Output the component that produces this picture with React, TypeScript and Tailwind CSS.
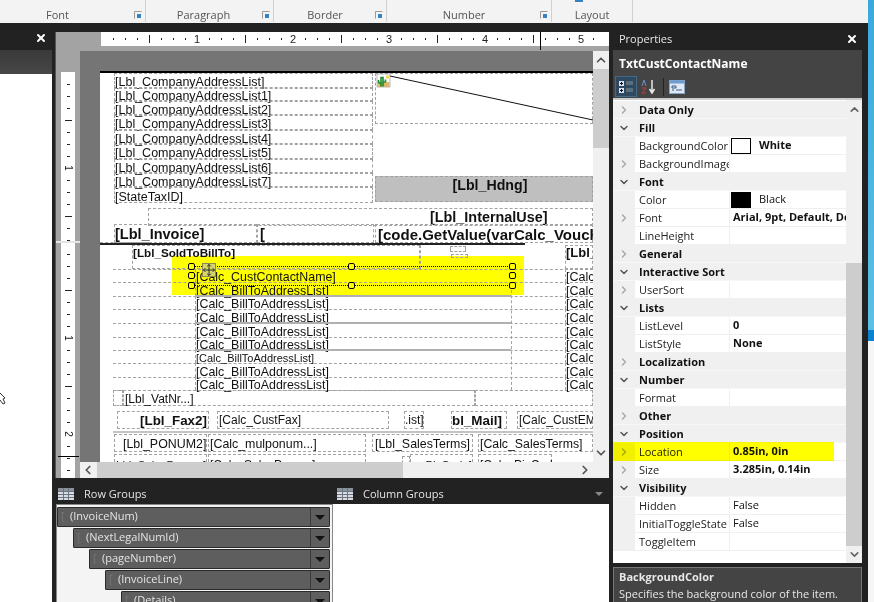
import { ChevronDown, ChevronRight, ChevronUp, ChevronLeft, X } from "lucide-react";

const uiFont = "font-['Open_Sans','Noto_Sans',sans-serif]";

const ribbonGroups = [
  { label: "Font", w: "w-[146px]", pr: "pr-[30px]", launcher: true },
  { label: "Paragraph", w: "w-[128px]", pr: "pr-[12px]", launcher: true },
  { label: "Border", w: "w-[113px]", pr: "pr-[10px]", launcher: true },
  { label: "Number", w: "w-[165px]", pr: "pr-[10px]", launcher: true },
  { label: "Layout", w: "w-[81px]", pr: "pr-0", launcher: false },
];

type Field = {
  text?: string;
  x: number;
  y: number;
  w: number;
  h: number;
  bold?: boolean;
  size?: number;
  pad?: number;
  top?: number;
  shift?: number;
  plain?: boolean;
};

const addressTops = [0, 15, 28, 42, 57, 71, 86, 100];
const addressHeights = [15, 13, 14, 15, 14, 15, 14, 14];

// report items sit at free positions on the design surface, relative to the page
const fields: Field[] = [
  ...["[Lbl_CompanyAddressList]", "[Lbl_CompanyAddressList1]", "[Lbl_CompanyAddressList2]", "[Lbl_CompanyAddressList3]", "[Lbl_CompanyAddressList4]", "[Lbl_CompanyAddressList5]", "[Lbl_CompanyAddressList6]", "[Lbl_CompanyAddressList7]"].map(
    (text, i) => ({ text, x: 14, y: addressTops[i], w: 259, h: addressHeights[i], shift: 4 }),
  ),
  { text: "[StateTaxID]", x: 14, y: 114, w: 259, h: 16, shift: 4 },
  { x: 275, y: 0, w: 218, h: 51 },
  { x: 48, y: 135, w: 445, h: 18 },
  { text: "[Lbl_InternalUse]", x: 330, y: 135, w: 120, h: 18, bold: true, size: 14.4, plain: true },
  { text: "[Lbl_Invoice]", x: 14, y: 151, w: 143, h: 19, bold: true, size: 14.5, shift: 2 },
  { text: "[", x: 157, y: 151, w: 117, h: 19, bold: true, size: 14.5, pad: 2, shift: 2 },
  { text: "[code.GetValue(varCalc_Vouch", x: 275, y: 151, w: 218, h: 19, bold: true, size: 15, pad: 2, shift: 2 },
  { text: "[Lbl_SoldToBillTo]", x: 32, y: 172, w: 288, h: 24, bold: true, size: 11.7, top: 0 },
  { x: 350, y: 173, w: 16, h: 6 },
  { x: 351, y: 181, w: 17, h: 4 },
  { text: "[Lbl_", x: 465, y: 172, w: 28, h: 24, bold: true, size: 13, top: 0 },
  { x: 13, y: 317, w: 10, h: 16 },
  { text: "[Lbl_VatNr...]", x: 23, y: 317, w: 352, h: 16, size: 12, pad: 1, shift: 2 },
  { x: 375, y: 317, w: 118, h: 16 },
  { text: "[Lbl_Fax2]", x: 17, y: 338, w: 92, h: 18, bold: true, size: 13.4, pad: 22 },
  { text: "[Calc_CustFax]", x: 117, y: 338, w: 172, h: 18, size: 12, pad: 1 },
  { text: ".ist]", x: 304, y: 338, w: 20, h: 18, size: 12 },
  { text: "bl_Mail]", x: 351, y: 338, w: 56, h: 18, bold: true, size: 13.4 },
  { text: "[Calc_CustEM", x: 417, y: 338, w: 76, h: 18, size: 12, pad: 1 },
  { text: "[Lbl_PONUM2]", x: 14, y: 361, w: 93, h: 18, size: 12.4, pad: 8, shift: 2 },
  { text: "[Calc_mulponum...]", x: 108, y: 361, w: 158, h: 18, size: 12.4, pad: 1, shift: 2 },
  { text: "[Lbl_SalesTerms]", x: 272, y: 361, w: 101, h: 18, size: 12.4, pad: 2, shift: 2 },
  { text: "[Calc_SalesTerms]", x: 378, y: 361, w: 115, h: 18, size: 12.3, pad: 1, shift: 2 },
  { text: "Lbl_SalesPerson]", x: 14, y: 381, w: 93, h: 18, size: 11.5, pad: 1, shift: 4 },
  { text: "[Calc_SalesPerson]", x: 108, y: 381, w: 158, h: 18, size: 12, pad: 1, shift: 4 },
  { x: 302, y: 383, w: 8, h: 16 },
  { text: "_PicCode]", x: 310, y: 381, w: 63, h: 18, size: 11.5, pad: 8, shift: 4 },
  { text: "[Calc_PicCod", x: 378, y: 381, w: 74, h: 18, size: 12, pad: 1, shift: 4 },
];

const billRows = [
  { y: 196, h: 13, text: "[Calc_CustContactName]" },
  { y: 209, h: 14, text: "[Calc_BillToAddressList]" },
  { y: 223, h: 13, text: "[Calc_BillToAddressList]", solid: true },
  { y: 236, h: 14, text: "[Calc_BillToAddressList]" },
  { y: 250, h: 14, text: "[Calc_BillToAddressList]", solid: true },
  { y: 264, h: 13, text: "[Calc_BillToAddressList]" },
  { y: 277, h: 13, text: "[Calc_BillToAddressList]", small: true, solid: true },
  { y: 290, h: 14, text: "[Calc_BillToAddressList]" },
  { y: 304, h: 13, text: "[Calc_BillToAddressList]" },
];

const sideTicks = [
  ...Array.from({ length: 14 }, (_, i) => ({ y: 12 * (i + 1), n: i + 1 })),
  ...Array.from({ length: 19 }, (_, i) => ({ y: 170 + 12 * (i + 1), n: i + 1 })),
];

function ReportField({ f }: { f: Field }) {
  return (
    <div
      className={`absolute flex whitespace-nowrap text-[#111] font-['Liberation_Sans',Arial,sans-serif] ${f.top !== undefined ? "items-start" : "items-center"} ${f.plain ? "" : "border border-dashed border-[#a3a3a3]"} ${f.bold ? "font-bold" : ""}`}
      style={{ left: f.x, top: f.y, width: f.w, height: f.h, fontSize: f.size ?? 12.5, lineHeight: "13px", paddingLeft: f.pad ?? 0, paddingTop: f.top ?? f.shift ?? 0 }}
    >
      {f.text}
    </div>
  );
}

function Handle({ x, y }: { x: number; y: number }) {
  return <div className="absolute z-10 w-[7px] h-[7px] rounded-[2px] border border-black bg-[#ffff00]" style={{ left: x, top: y }} />;
}

function DesignPage() {
  return (
    <div className="relative h-full overflow-hidden bg-white border-t-2 border-black">
      {/* yellow highlight of the selected row */}
      <div className="absolute left-[72px] top-[183px] w-[352px] h-[39px] bg-[#ffff00]" />

      {fields.map((f, i) => (
        <ReportField key={i} f={f} />
      ))}

      {/* image placeholder and diagonal line */}
      <svg className="absolute left-[275px] top-0 w-[218px] h-[51px]" viewBox="0 0 218 51">
        <line x1="15" y1="3" x2="218" y2="47" stroke="#111" strokeWidth="1" />
        <rect x="2" y="1" width="13" height="13" fill="#fff" stroke="#777" strokeWidth="0.5" />
        <rect x="2.5" y="9" width="12" height="5" fill="#d9b76c" />
        <path d="M6 13.5V4.5h2v9M3.5 10V7M3.5 10H6M10.5 9V6.5M8 9h2.5" fill="none" stroke="#1c8c2e" strokeWidth="1.6" />
        <rect x="11" y="2.5" width="3" height="3" fill="#f0d860" />
      </svg>

      {/* header band */}
      <div className="absolute left-[275px] top-[103px] w-[218px] h-[26px] pl-[12px] bg-[#bfbfbf] border border-dashed border-[#a0a0a0] text-center text-[14.2px] font-bold leading-[17px] text-[#111] font-['Liberation_Sans',Arial,sans-serif]">
        [Lbl_Hdng]
      </div>

      {/* invoice rule */}
      <div className="absolute left-0 top-[170px] w-[425px] h-[2px] bg-[#222]" />
      <div className="absolute left-0 top-[169px] w-[50px] border-t border-dashed border-[#a3a3a3]" />
      <div className="absolute left-[320px] top-[172px] h-[24px] border-l border-dashed border-[#a3a3a3]" />

      {/* bill-to rows */}
      {billRows.map((r) => (
        <div key={r.y} className="absolute left-[13px] w-[480px] border-t border-dashed border-[#a3a3a3]" style={{ top: r.y }} />
      ))}
      <div className="absolute left-[13px] top-[317px] w-[480px] border-t border-dashed border-[#a3a3a3]" />
      {billRows.map((r) => (
        <div
          key={`t${r.y}`}
          className={`absolute left-[95px] w-[316px] flex items-center whitespace-nowrap pt-[4px] text-[#111] font-['Liberation_Sans',Arial,sans-serif] border-l border-dashed border-[#a3a3a3] ${r.small ? "text-[11px]" : "text-[12.4px]"}`}
          style={{ top: r.y, height: r.h, lineHeight: "13px" }}
        >
          {r.text}
        </div>
      ))}
      {billRows.map((r) => (
        <div
          key={`c${r.y}`}
          className="absolute left-[465px] w-[28px] flex items-center whitespace-nowrap pt-[4px] border-l border-dashed border-[#a3a3a3] text-[12.5px] text-[#111] font-['Liberation_Sans',Arial,sans-serif]"
          style={{ top: r.y, height: r.h, lineHeight: "13px" }}
        >
          [Calc
        </div>
      ))}
      {billRows.filter((r) => r.solid).map((r) => (
        <div key={`s${r.y}`} className="absolute left-[95px] w-[316px] border-t-2 border-[#b0b0b0]" style={{ top: r.y - 1 }} />
      ))}
      <div className="absolute left-[411px] top-[212px] h-[105px] border-l border-dashed border-[#a3a3a3]" />
      <div className="absolute left-[13px] top-[358px] w-[480px] h-[2px] bg-[#c4c4c4]" />

      {/* selected textbox */}
      <div className="absolute left-[91px] top-[193px] w-[321px] h-[20px] border-y border-dotted border-black" />
      <Handle x={88} y={190} />
      <Handle x={248} y={190} />
      <Handle x={409} y={190} />
      <Handle x={88} y={199} />
      <Handle x={409} y={199} />
      <Handle x={88} y={209} />
      <Handle x={248} y={209} />
      <Handle x={409} y={209} />
      <div className="absolute z-10 left-[102px] top-[190px] w-[14px] h-[14px] flex items-center justify-center bg-[#d4d46a] border border-[#8a8a50]">
        <svg width="12" height="12" viewBox="0 0 13 13" fill="none" stroke="#222" strokeWidth="1">
          <path d="M6.5 0.5v12M0.5 6.5h12M4.5 2.5l2-2 2 2M4.5 10.5l2 2 2-2M2.5 4.5l-2 2 2 2M10.5 4.5l2 2-2 2" />
        </svg>
      </div>
    </div>
  );
}

function TopRuler() {
  const ticks = Array.from({ length: 41 });
  return (
    <div className="relative h-[14px] bg-white ml-[45px] mb-[5px] shrink-0 text-[11px] leading-[14px] text-[#222] font-['Liberation_Sans',Arial,sans-serif]">
      {ticks.map((_, i) => {
        const x = 12 * (i + 1);
        if ((i + 1) % 8 === 0) return <span key={i} className="absolute top-0" style={{ left: x - 3 }}>{(i + 1) / 8}</span>;
        if ((i + 1) % 4 === 0) return <span key={i} className="absolute top-[3px] h-[8px] w-px bg-[#222]" style={{ left: x }} />;
        return <span key={i} className="absolute top-[6px] h-[2px] w-px bg-[#222]" style={{ left: x }} />;
      })}
      <span className="absolute left-[439px] top-0 h-[18px] w-px bg-black" />
    </div>
  );
}

function SideRuler() {
  return (
    <div className="relative w-[24px] shrink-0">
      <div className="absolute left-[5px] top-[21px] bottom-0 w-[14px] bg-white">
        {sideTicks.map((t) => {
          if (t.n === 8 || t.n === 16) {
            return (
              <span key={t.y} className="absolute left-0 w-full text-center text-[10px] leading-[10px] rotate-90 text-[#222] font-['Liberation_Sans',Arial,sans-serif]" style={{ top: t.y - 5 }}>
                {t.n / 8}
              </span>
            );
          }
          if (t.n % 4 === 0) return <span key={t.y} className="absolute left-[4px] w-[7px] h-px bg-[#222]" style={{ top: t.y }} />;
          return <span key={t.y} className="absolute left-[6px] w-[3px] h-px bg-[#222]" style={{ top: t.y }} />;
        })}
        <span className="absolute -left-[3px] top-[384px] w-[21px] h-px bg-black" />
      </div>
      <div className="absolute left-0 top-[190px] w-full h-[2px] bg-[#e4e4e4]" />
    </div>
  );
}

function RibbonBar() {
  return (
    <div className={`flex h-[23px] shrink-0 bg-[#f3f3f3] ${uiFont}`}>
      {ribbonGroups.map((g) => (
        <div key={g.label} className={`relative flex items-end justify-center h-[22px] border-r border-[#d0d0d0] text-[11px] leading-[15px] text-[#555] ${g.w} ${g.pr}`}>
          <span>{g.label}</span>
          {g.launcher ? (
            <svg className="absolute right-[3px] bottom-[3px]" width="8" height="8" viewBox="0 0 8 8">
              <path d="M0.5 7.5v-7h7" fill="none" stroke="#9a9a9a" />
              <rect x="3" y="3" width="4" height="4" fill="#3a7fc0" />
            </svg>
          ) : (
            <span className="absolute left-[23px] top-0 w-[8px] h-[2px] bg-[#3a7fc0]" />
          )}
        </div>
      ))}
      <div className="flex-1 mr-[3px] bg-[#f3f3f3]" />
    </div>
  );
}

function PropHeader({ label, open }: { label: string; open: boolean }) {
  return (
    <div className="flex h-[18px] items-center pt-px bg-[#f0f0f0] border-b border-[#f7f7f7]">
      <div className="w-[22px] flex justify-center text-[#555]">
        {open ? <ChevronDown size={12} strokeWidth={3} /> : <ChevronRight size={12} strokeWidth={3} className="text-[#aaa]" />}
      </div>
      <span className="pl-[4px] text-[11px] font-bold text-[#111]">{label}</span>
    </div>
  );
}

function PropRow({
  label,
  value,
  expand,
  bold,
  swatch,
  highlight,
}: {
  label: string;
  value?: string;
  expand?: boolean;
  bold?: boolean;
  swatch?: string;
  highlight?: boolean;
}) {
  return (
    <div className="relative flex h-[18px] items-stretch bg-[#f0f0f0]">
      <div className="w-[22px] flex items-center justify-center">
        {expand ? <ChevronRight size={12} strokeWidth={3} className="text-[#aaa]" /> : null}
      </div>
      <div className="w-[94px] pl-[4px] mr-px overflow-hidden whitespace-nowrap text-[11px] leading-[18px] text-[#222] border-b border-[#f0f0f0] bg-white">{label}</div>
      <div className={`flex-1 min-w-0 flex items-center overflow-hidden whitespace-nowrap text-[11px] text-[#111] border-b border-[#f0f0f0] bg-white ${swatch ? "pl-px" : "pl-[3px]"} ${bold ? "font-bold" : ""}`}>
        {swatch ? <span className={`mr-[8px] shrink-0 inline-block w-[20px] h-[16px] border border-black ${swatch}`} /> : null}
        {value}
      </div>
      {highlight ? <div className="absolute left-0 -top-px -bottom-[2px] w-[221px] bg-[#ffff00] mix-blend-multiply" /> : null}
    </div>
  );
}

function GroupRow({ label, indent }: { label: string; indent: string }) {
  return (
    <div className={`flex h-[20px] mb-px rounded-[1px] border border-[#2a2a2a] bg-[#5e5e5e] text-[11px] leading-[16px] text-[#e4e4e4] ${indent}`}>
      <span className="w-[9px] ml-[3px] text-[#777]">[</span>
      <span className="flex-1 whitespace-nowrap">{label}</span>
      <span className="w-[19px] flex items-center justify-center border-l border-[#3a3a3a]">
        <span className="w-0 h-0 border-x-[5px] border-x-transparent border-t-[5px] border-t-[#111]" />
      </span>
    </div>
  );
}

function GridIcon() {
  return (
    <svg width="16" height="12" viewBox="0 0 16 12">
      <rect width="16" height="12" fill="#d8dce2" />
      <path d="M0 0h16v3H0z" fill="#8a929c" />
      <path d="M5.5 0v12M10.5 0v12M0 3.5h16M0 6.5h16M0 9.5h16" stroke="#6c7480" strokeWidth="1" />
    </svg>
  );
}

export default function App() {
  return (
    <div className={`flex w-[874px] h-[602px] overflow-hidden bg-[#222] ${uiFont}`}>
      <div className="flex flex-col w-[868px] shrink-0">
        <RibbonBar />
        <div className="flex flex-1 min-h-0">
          {/* left docked panel */}
          <div className="flex flex-col w-[52px] shrink-0 mr-[3px]">
            <div className="flex h-[27px] items-center justify-end pr-[5px] pt-[3px] bg-[#222] text-white">
              <X size={12} strokeWidth={4} />
            </div>
            <div className="h-[24px] bg-gradient-to-b from-[#3a3a3a] to-[#474747]" />
            <div className="relative flex-1 bg-white">
              <svg className="absolute left-0 top-[318px]" width="8" height="14" viewBox="0 0 8 14" fill="#fff" stroke="#333" strokeWidth="1">
                <path d="M0 1l5 5-2 1 2 4-2 1-3-4" />
              </svg>
            </div>
          </div>

          {/* center: designer and grouping pane */}
          <div className="flex flex-col w-[554px] shrink-0 mr-[1px]">
            <div className="flex flex-col h-[446px] mt-[9px] bg-[#a3a3a3] border-l border-[#555]">
              <TopRuler />
              <div className="flex flex-1 min-h-0">
                <SideRuler />
                <div className="flex flex-col flex-1 min-w-0">
                  <div className="flex flex-1 min-h-0">
                    <div className="flex-1 min-w-0 bg-[#757575] pt-[20px] pl-[20px]">
                      <DesignPage />
                    </div>
                    <div className="flex flex-col w-[16px] bg-[#f0f0f0] text-[#555]">
                      <ChevronUp size={14} strokeWidth={3} className="my-[2px] mx-auto shrink-0" />
                      <div className="h-[79px] bg-[#cdcdcd]" />
                      <div className="flex-1" />
                      <ChevronDown size={14} strokeWidth={3} className="my-[2px] mx-auto shrink-0" />
                    </div>
                  </div>
                  <div className="flex h-[16px] items-center bg-[#f0f0f0] text-[#555]">
                    <ChevronLeft size={14} strokeWidth={3} className="mx-[1px] shrink-0" />
                    <div className="ml-px w-[306px] h-full bg-[#cdcdcd]" />
                    <div className="flex-1" />
                    <ChevronRight size={14} strokeWidth={3} className="mr-[17px] shrink-0" />
                  </div>
                </div>
              </div>
            </div>

            <div className="flex flex-1 min-h-0 pt-[1px]">
              <div className="flex flex-col w-[278px] shrink-0">
                <div className="flex h-[25px] items-center gap-[10px] pl-[3px] pt-[5px] text-[11px] text-[#e4e4e4]">
                  <GridIcon />
                  <span>Row Groups</span>
                </div>
                <div className="flex-1 ml-[1px] w-[277px] bg-[#f4f4f4] border border-[#888] border-b-0 pt-[2px] pr-[2px] overflow-hidden">
                  <GroupRow label="(InvoiceNum)" indent="ml-0" />
                  <GroupRow label="(NextLegalNumId)" indent="ml-[16px]" />
                  <GroupRow label="(pageNumber)" indent="ml-[32px]" />
                  <GroupRow label="(InvoiceLine)" indent="ml-[48px]" />
                  <GroupRow label="(Details)" indent="ml-[64px]" />
                </div>
              </div>
              <div className="flex flex-col flex-1 min-w-0">
                <div className="flex h-[25px] items-center gap-[10px] pl-[4px] pt-[5px] text-[11px] text-[#e4e4e4]">
                  <GridIcon />
                  <span className="flex-1">Column Groups</span>
                  <span className="mr-[6px] w-0 h-0 border-x-[4px] border-x-transparent border-t-[4px] border-t-[#888]" />
                </div>
                <div className="flex-1 bg-white" />
              </div>
            </div>
          </div>

          {/* properties panel */}
          <div className="flex flex-col w-[258px] shrink-0 pr-[6px] text-[#e8e8e8]">
            <div className="flex h-[27px] items-center justify-between pl-[9px] pr-[4px] pt-[5px] text-[11px]">
              <span>Properties</span>
              <X size={12} strokeWidth={4} className="text-white" />
            </div>
            <div className="flex flex-col flex-1 min-h-0 ml-[3px] bg-[#444]">
              <div className="h-[26px] pl-[6px] pt-px flex items-center text-[12px] font-bold text-white">TxtCustContactName</div>
              <div className="flex h-[21px] items-center gap-[3px] px-[2px]">
                <span className="flex w-[22px] h-[21px] items-center justify-center bg-[#2f4a60] border border-[#3f6a8a]">
                  <svg width="16" height="14" viewBox="0 0 16 14">
                    <rect x="1" y="1" width="5" height="5" fill="#d8e2ee" />
                    <rect x="1" y="8" width="5" height="5" fill="#d8e2ee" />
                    <path d="M2 3.5h3M3.5 2v3M2 10.5h3M3.5 9v3" stroke="#111" />
                    <path d="M8 2h7M8 4h7M8 9h7M8 11h7" stroke="#8a9098" />
                  </svg>
                </span>
                <svg width="18" height="16" viewBox="0 0 18 16">
                  <path d="M2 7l2-6 2 6" fill="none" stroke="#6a8ecb" />
                  <path d="M2 9h4l-4 5h4" fill="none" stroke="#c04040" />
                  <path d="M12 1v12M9.5 10l2.5 4 2.5-4" fill="none" stroke="#e8e8e8" strokeWidth="1.5" />
                </svg>
                <span className="w-px h-[18px] bg-[#222] mx-[2px]" />
                <svg width="16" height="14" viewBox="0 0 16 14">
                  <rect x="0.5" y="0.5" width="15" height="13" fill="#dfe9f5" stroke="#8aa4c4" />
                  <rect x="0.5" y="0.5" width="15" height="3" fill="#6f9bd0" />
                  <path d="M3 6h4v2H3zM3 10h2M7 10h6" stroke="#3c5a82" fill="none" />
                </svg>
              </div>
              <div className="flex flex-1 min-h-0 mt-[1px] border-t-2 border-[#ccc] bg-white">
                <div className="flex-1 min-w-0 overflow-hidden bg-white pt-[1px]">
                  <PropHeader label="Data Only" open={false} />
                  <PropHeader label="Fill" open />
                  <PropRow label="BackgroundColor" value="White" bold swatch="bg-white" />
                  <PropRow label="BackgroundImage" expand />
                  <PropHeader label="Font" open />
                  <PropRow label="Color" value="Black" swatch="bg-black" />
                  <PropRow label="Font" value="Arial, 9pt, Default, Default" bold expand />
                  <PropRow label="LineHeight" />
                  <PropHeader label="General" open={false} />
                  <PropHeader label="Interactive Sort" open />
                  <PropRow label="UserSort" expand />
                  <PropHeader label="Lists" open />
                  <PropRow label="ListLevel" value="0" bold />
                  <PropRow label="ListStyle" value="None" bold />
                  <PropHeader label="Localization" open={false} />
                  <PropHeader label="Number" open />
                  <PropRow label="Format" />
                  <PropHeader label="Other" open={false} />
                  <PropHeader label="Position" open />
                  <PropRow label="Location" value="0.85in, 0in" bold expand highlight />
                  <PropRow label="Size" value="3.285in, 0.14in" bold expand />
                  <PropHeader label="Visibility" open />
                  <PropRow label="Hidden" value="False" />
                  <PropRow label="InitialToggleState" value="False" />
                  <PropRow label="ToggleItem" />
                </div>
                <div className="flex flex-col w-[16px] bg-[#f0f0f0] text-[#666]">
                  <div className="flex h-[163px] shrink-0 items-start justify-center pt-[3px]">
                    <ChevronUp size={13} strokeWidth={3} />
                  </div>
                  <div className="flex-1 bg-[#cdcdcd]" />
                  <div className="flex h-[17px] shrink-0 items-center justify-center">
                    <ChevronDown size={13} strokeWidth={3} />
                  </div>
                </div>
              </div>
              <div className="h-[4px] bg-[#222]" />
              <div className="h-[35px] border border-[#777] border-b-0 pl-[5px] text-[11px] leading-[17px] whitespace-nowrap overflow-hidden">
                <div className="font-bold">BackgroundColor</div>
                <div>Specifies the background color of the item.</div>
              </div>
            </div>
          </div>
        </div>
      </div>

      {/* window behind the app */}
      <div className="flex flex-col w-[6px] shrink-0">
        <div className="h-[330px] bg-gradient-to-b from-[#39a9dc] to-[#5cc0e6]" />
        <div className="h-[11px] bg-[#0a82d0]" />
        <div className="flex-1 bg-[#f6f6f6]" />
      </div>
    </div>
  );
}
